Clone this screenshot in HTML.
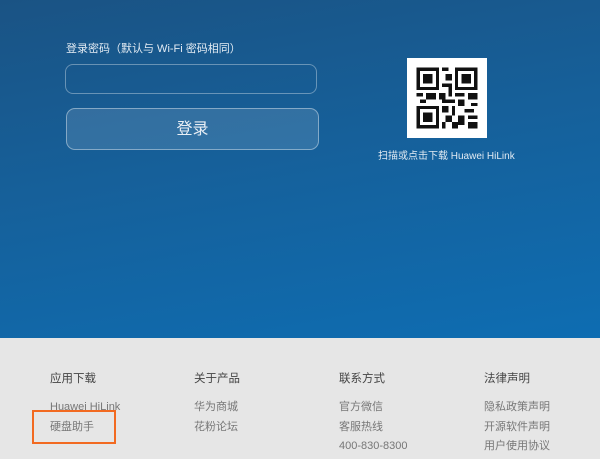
<!DOCTYPE html>
<html><head><meta charset="utf-8"><style>
*{margin:0;padding:0;box-sizing:border-box}
body{width:600px;height:457px;overflow:hidden;font-family:"Liberation Sans","Noto Sans CJK SC",sans-serif;position:relative;background:#e6e6e6}
.top{position:absolute;left:0;top:0;width:600px;height:338px;background:linear-gradient(170deg,#1a5384 0%,#16609a 45%,#0e6db2 100%)}
.lbl{position:absolute;left:66px;top:40px;font-size:11px;color:#e2ebf3}
.inp{position:absolute;left:65px;top:64px;width:252px;height:30px;border:1px solid rgba(255,255,255,.35);border-radius:8px}
.btn{position:absolute;left:66px;top:108px;width:253px;height:42px;border:1px solid rgba(255,255,255,.4);border-radius:9px;background:rgba(255,255,255,.12);color:#e8eef5;font-size:16px;text-align:center;line-height:42px}
.qr{position:absolute;left:407px;top:58px;width:80px;height:80px;background:#fff}
.qt{position:absolute;left:378px;top:147px;font-size:10px;color:#e0eaf3;white-space:nowrap}
.col{position:absolute;top:372px;font-size:11px;color:#777}
.col h4{font-weight:normal;color:#444;font-size:11.5px;line-height:14px;margin-bottom:14px}
.col div{height:19.5px;line-height:14px}
.box{position:absolute;left:32px;top:410px;width:84px;height:34px;border:2px solid #f26a21}
</style></head><body>
<div class="top"></div>
<div class="lbl">登录密码（默认与 Wi-Fi 密码相同）</div>
<div class="inp"></div>
<div class="btn">登录</div>
<div class="qr"><svg width="80" height="80" viewBox="0 0 25 25" shape-rendering="crispEdges">
<g fill="#111">
<path d="M3 3h7v7H3zM4 4v5h5V4zM5 5h3v3H5z" fill-rule="evenodd"/>
<path d="M15 3h7v7h-7zM16 4v5h5V4zM17 5h3v3h-3z" fill-rule="evenodd"/>
<path d="M3 15h7v7H3zM4 16v5h5v-5zM5 17h3v3H5z" fill-rule="evenodd"/>
<rect x="11" y="3" width="2" height="1"/><rect x="12" y="5" width="2" height="2"/><rect x="11" y="8" width="3" height="1"/><rect x="13" y="9" width="1" height="3"/>
<rect x="3" y="11" width="2" height="1"/><rect x="6" y="11" width="3" height="2"/><rect x="10" y="11" width="2" height="2"/><rect x="15" y="11" width="3" height="1"/><rect x="19" y="11" width="3" height="2"/>
<rect x="4" y="13" width="2" height="1"/><rect x="11" y="13" width="4" height="1"/><rect x="16" y="13" width="2" height="2"/><rect x="20" y="14" width="2" height="1"/>
<rect x="11" y="15" width="2" height="2"/><rect x="14" y="15" width="1" height="3"/><rect x="18" y="16" width="3" height="1"/><rect x="12" y="18" width="2" height="2"/>
<rect x="16" y="18" width="2" height="3"/><rect x="19" y="18" width="3" height="1"/><rect x="11" y="20" width="1" height="2"/><rect x="14" y="20" width="2" height="2"/><rect x="19" y="20" width="3" height="2"/>
</g></svg></div>
<div class="qt">扫描或点击下载 Huawei HiLink</div>
<div class="col" style="left:50px"><h4>应用下载</h4><div>Huawei HiLink</div><div>硬盘助手</div></div>
<div class="col" style="left:194px"><h4>关于产品</h4><div>华为商城</div><div>花粉论坛</div></div>
<div class="col" style="left:339px"><h4>联系方式</h4><div>官方微信</div><div>客服热线</div><div>400-830-8300</div></div>
<div class="col" style="left:484px"><h4>法律声明</h4><div>隐私政策声明</div><div>开源软件声明</div><div>用户使用协议</div></div>
<div class="box"></div>
</body></html>
